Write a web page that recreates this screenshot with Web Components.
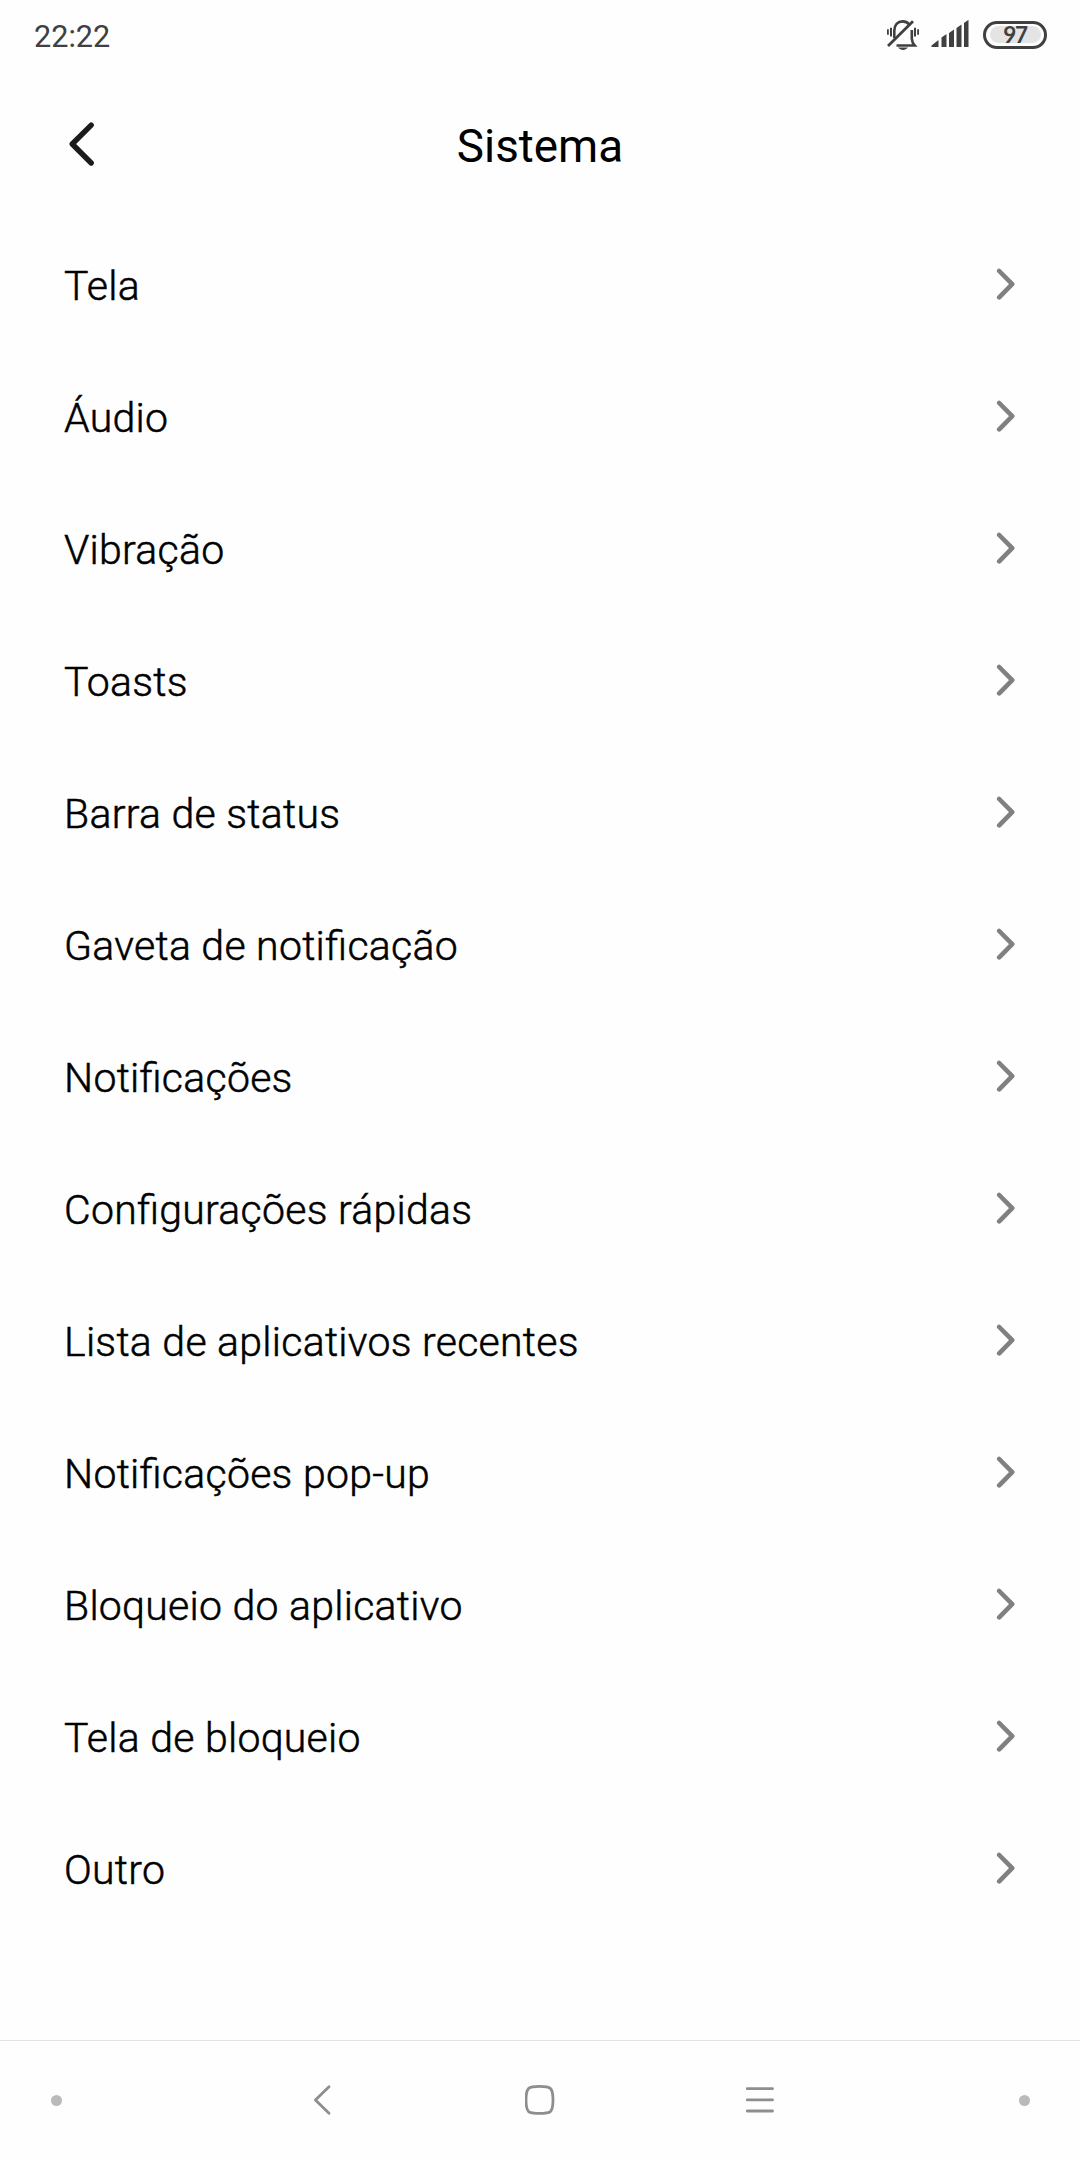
<!DOCTYPE html>
<html lang="pt-BR">
<head>
<meta charset="utf-8">
<title>Sistema</title>
<style>
    html, body {
        margin: 0;
        height: 100%;
        background: #fefefe;
        font-family: Roboto, "Noto Sans", sans-serif;
    }
</style>
</head>
<body>
<settings-screen></settings-screen>

<script>
/**
 * Status bar: clock, muted bell, signal and battery
 */
class StatusBar extends HTMLElement {
    constructor() {
        super();
        this.attachShadow({ mode: "open" });
    }

    connectedCallback() {
        this.shadowRoot.innerHTML = `
        <style>
            :host {
                display: flex;
                justify-content: space-between;
                height: 70px;
                box-sizing: border-box;
                padding: 0 33px 0 34px;
                color: #404040;
            }
            .clock {
                font-size: 30.6px;
                line-height: 36px;
                padding-top: 19px;
            }
            .icons {
                display: flex;
                align-items: flex-start;
            }
            svg {
                display: block;
            }
            .bell {
                margin: 18px 11px 0 0;
            }
            .signal {
                margin: 19px 13px 0 0;
            }
            .battery {
                display: flex;
                align-items: center;
                justify-content: center;
                box-sizing: border-box;
                width: 64px;
                height: 28px;
                margin-top: 20.5px;
                border: 3px solid #404040;
                border-radius: 14px;
                padding: 2.5px 3.5px;
            }
            .level {
                flex: 1;
                height: 17px;
                border-radius: 9px;
                background: #e4e4e4;
                font: 700 22.5px/18px Lato, sans-serif;
                letter-spacing: -1.4px;
                text-align: center;
            }
        </style>
        <span class="clock">${this.getAttribute("time")}</span>
        <div class="icons">
            <svg class="bell" width="34" height="34" viewBox="0 0 34 34" fill="none" stroke="#404040" stroke-width="2.6">
                <path d="M8.3 20V12.5C8.3 7 11.7 3.4 16.5 3.4C19.5 3.4 21.6 4.4 23.3 6.4"/>
                <path d="M25.8 12V20.5C25.8 23.5 26.6 25 28.8 27.5H10.5"/>
                <path d="M2 28L27 3.3" stroke-width="2.8"/>
                <path d="M5 9.8V18.6M29 9.8V18.6" stroke-width="2"/>
                <path d="M1.9 11.2V16.8M32.1 11.2V16.8" stroke-width="1.8"/>
                <path d="M12 29.5H22C20.5 31.1 19 31.9 17 31.9C15 31.9 13.5 31.1 12 29.5Z" fill="#404040" stroke="none"/>
            </svg>
            <svg class="signal" width="39" height="29" viewBox="0 0 39 29" fill="#404040">
                <path d="M.5 28V26.5L7.5 21V28ZM10.5 28V18.5L15.5 15V28ZM18 28V14L23 10.5V28ZM25.5 28V9L30.5 5.5V28ZM33 28V4L37.5 .8V28Z"/>
            </svg>
            <div class="battery"><span class="level">${this.getAttribute("battery")}</span></div>
        </div>`;
    }
}
customElements.define("status-bar", StatusBar);

/**
 * Title bar with a back arrow
 */
class TitleBar extends HTMLElement {
    constructor() {
        super();
        this.attachShadow({ mode: "open" });
    }

    connectedCallback() {
        this.shadowRoot.innerHTML = `
        <style>
            :host {
                display: grid;
                grid-template-columns: 100px 1fr 100px;
                align-items: center;
                height: 148px;
                color: #000;
            }
            svg {
                display: block;
                margin: 0 0 0 66px;
            }
            h1 {
                margin: 6px 0 0;
                font-size: 45.8px;
                font-weight: 400;
                line-height: 54px;
                text-align: center;
            }
        </style>
        <svg width="30" height="46" viewBox="0 0 30 46" fill="none" stroke="#1b1b1b" stroke-width="5.4" stroke-linecap="round" stroke-linejoin="round">
            <path d="M25.2 4.2L6.2 23L25.2 42"/>
        </svg>
        <h1><slot></slot></h1>`;
    }
}
customElements.define("title-bar", TitleBar);

/**
 * One settings entry, label on the left and chevron on the right
 */
class SettingsRow extends HTMLElement {
    constructor() {
        super();
        this.attachShadow({ mode: "open" });
    }

    connectedCallback() {
        this.shadowRoot.innerHTML = `
        <style>
            :host {
                display: flex;
                align-items: center;
                justify-content: space-between;
                box-sizing: border-box;
                height: 132px;
                padding: 0 62px 0 64px;
                color: #000;
            }
            /* weight between light and regular; letter-spacing would drop the fi ligature */
            .label {
                padding-top: 3px;
                font-size: 41px;
                font-weight: 300;
                line-height: 48px;
                letter-spacing: .26px;
                font-feature-settings: "liga" 1;
                -webkit-text-stroke: .5px #000;
                white-space: nowrap;
            }
        </style>
        <span class="label"><slot></slot></span>
        <svg width="22" height="34" viewBox="0 0 22 34" fill="none" stroke="#808080" stroke-width="4.6" stroke-linecap="round" stroke-linejoin="round">
            <path d="M3.2 4L16.2 17.2L3.2 30.4"/>
        </svg>`;
    }
}
customElements.define("settings-row", SettingsRow);

/**
 * Bottom navigation bar
 */
class NavBar extends HTMLElement {
    constructor() {
        super();
        this.attachShadow({ mode: "open" });
    }

    connectedCallback() {
        this.shadowRoot.innerHTML = `
        <style>
            :host {
                display: flex;
                align-items: center;
                justify-content: space-between;
                box-sizing: border-box;
                height: 120px;
                padding: 0 50px 1px 51px;
                border-top: 1px solid #e2e2e2;
            }
            .dot {
                width: 11px;
                height: 11px;
                border-radius: 50%;
                background: #bababa;
            }
            .keys {
                display: flex;
                justify-content: space-between;
                width: 468px;
            }
            svg {
                display: block;
                fill: none;
                stroke: #8e8e8e;
                stroke-width: 2.8;
                stroke-linecap: round;
                stroke-linejoin: round;
            }
        </style>
        <span class="dot"></span>
        <div class="keys">
            <svg width="32" height="32" viewBox="0 0 32 32"><path d="M22 2.8L8.4 16L22 29.2"/></svg>
            <svg width="32" height="32" viewBox="0 0 32 32"><path d="M14.5 2.4C25.3 2.4 28 3 28 16S25.3 29.4 14.5 29.4S1 29 1 16S3.7 2.4 14.5 2.4Z"/></svg>
            <svg width="32" height="32" viewBox="0 0 32 32"><path d="M4.3 4.7H29.5M4.3 15.9H29.5M4.3 27H29.5"/></svg>
        </div>
        <span class="dot"></span>`;
    }
}
customElements.define("nav-bar", NavBar);

/**
 * Whole screen
 */
class SettingsScreen extends HTMLElement {
    constructor() {
        super();
        this.attachShadow({ mode: "open" });
        /** @type {string[]} entries of the list */
        this.items = [
            "Tela",
            "Áudio",
            "Vibração",
            "Toasts",
            "Barra de status",
            "Gaveta de notificação",
            "Notificações",
            "Configurações rápidas",
            "Lista de aplicativos recentes",
            "Notificações pop-up",
            "Bloqueio do aplicativo",
            "Tela de bloqueio",
            "Outro",
        ];
    }

    connectedCallback() {
        this.shadowRoot.innerHTML = `
        <style>
            :host {
                display: flex;
                flex-direction: column;
                height: 2160px;
                overflow: hidden;
            }
            main {
                flex: 1;
            }
        </style>
        <status-bar time="22:22" battery="97"></status-bar>
        <title-bar>Sistema</title-bar>
        <main>${this.items.map((item) => `<settings-row>${item}</settings-row>`).join("")}</main>
        <nav-bar></nav-bar>`;
    }
}
customElements.define("settings-screen", SettingsScreen);
</script>
</body>
</html>
